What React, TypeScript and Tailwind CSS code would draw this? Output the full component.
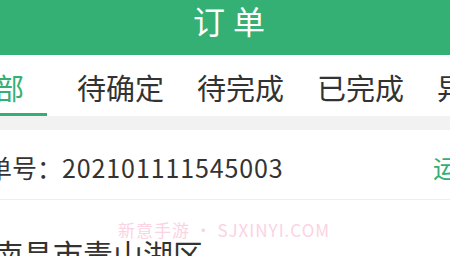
import React from "react";

const tabs = ["待确定", "待完成", "已完成", "异常"];

export default function App() {
  return (
    <div
      className="relative w-[450px] h-[256px] overflow-hidden bg-white"
      style={{ fontFamily: '"Noto Sans CJK SC", "Noto Sans", sans-serif' }}
    >
      <header className="h-[55px] bg-[#35b074] flex justify-center pl-[16px]">
        <h1 className="text-[32px] leading-[40px] text-white tracking-[8px]">订单</h1>
      </header>

      <nav className="h-[61px] flex flex-col justify-between whitespace-nowrap">
        <div className="flex items-center pt-[14px] text-[29px] leading-[36px] text-[#333]">
          <span className="ml-[-34px] w-[58px] text-[#35b074]">全部</span>
          <div className="flex gap-[33px] ml-[53px]">
            {tabs.map((t) => (
              <span key={t}>{t}</span>
            ))}
          </div>
        </div>
        <div className="w-[47px] h-[3px] bg-[#35b074]" />
      </nav>

      <div className="h-[14px] bg-[#f2f2f2]" />

      <div className="h-[70px] flex items-center justify-between border-b border-[#eeeeee] whitespace-nowrap">
        <div className="ml-[-13px] text-[25px] leading-[32px] text-[#333] pt-[4px]">
          单号：<span className="tracking-[0.9px]">202101111545003</span>
        </div>
        <div className="text-[25px] leading-[32px] text-[#35b074] mr-[-8px] pt-[4px]">运</div>
      </div>

      <div className="pt-[33px] ml-[-7px] text-[30px] leading-[40px] text-[#333] whitespace-nowrap">
        南昌市青山湖区
      </div>

      <div className="absolute left-[118px] top-[220px] text-[17px] leading-[20px] tracking-[1px] text-[#fbd3e3] whitespace-nowrap">
        新意手游 • SJXINYI.COM
      </div>
    </div>
  );
}
